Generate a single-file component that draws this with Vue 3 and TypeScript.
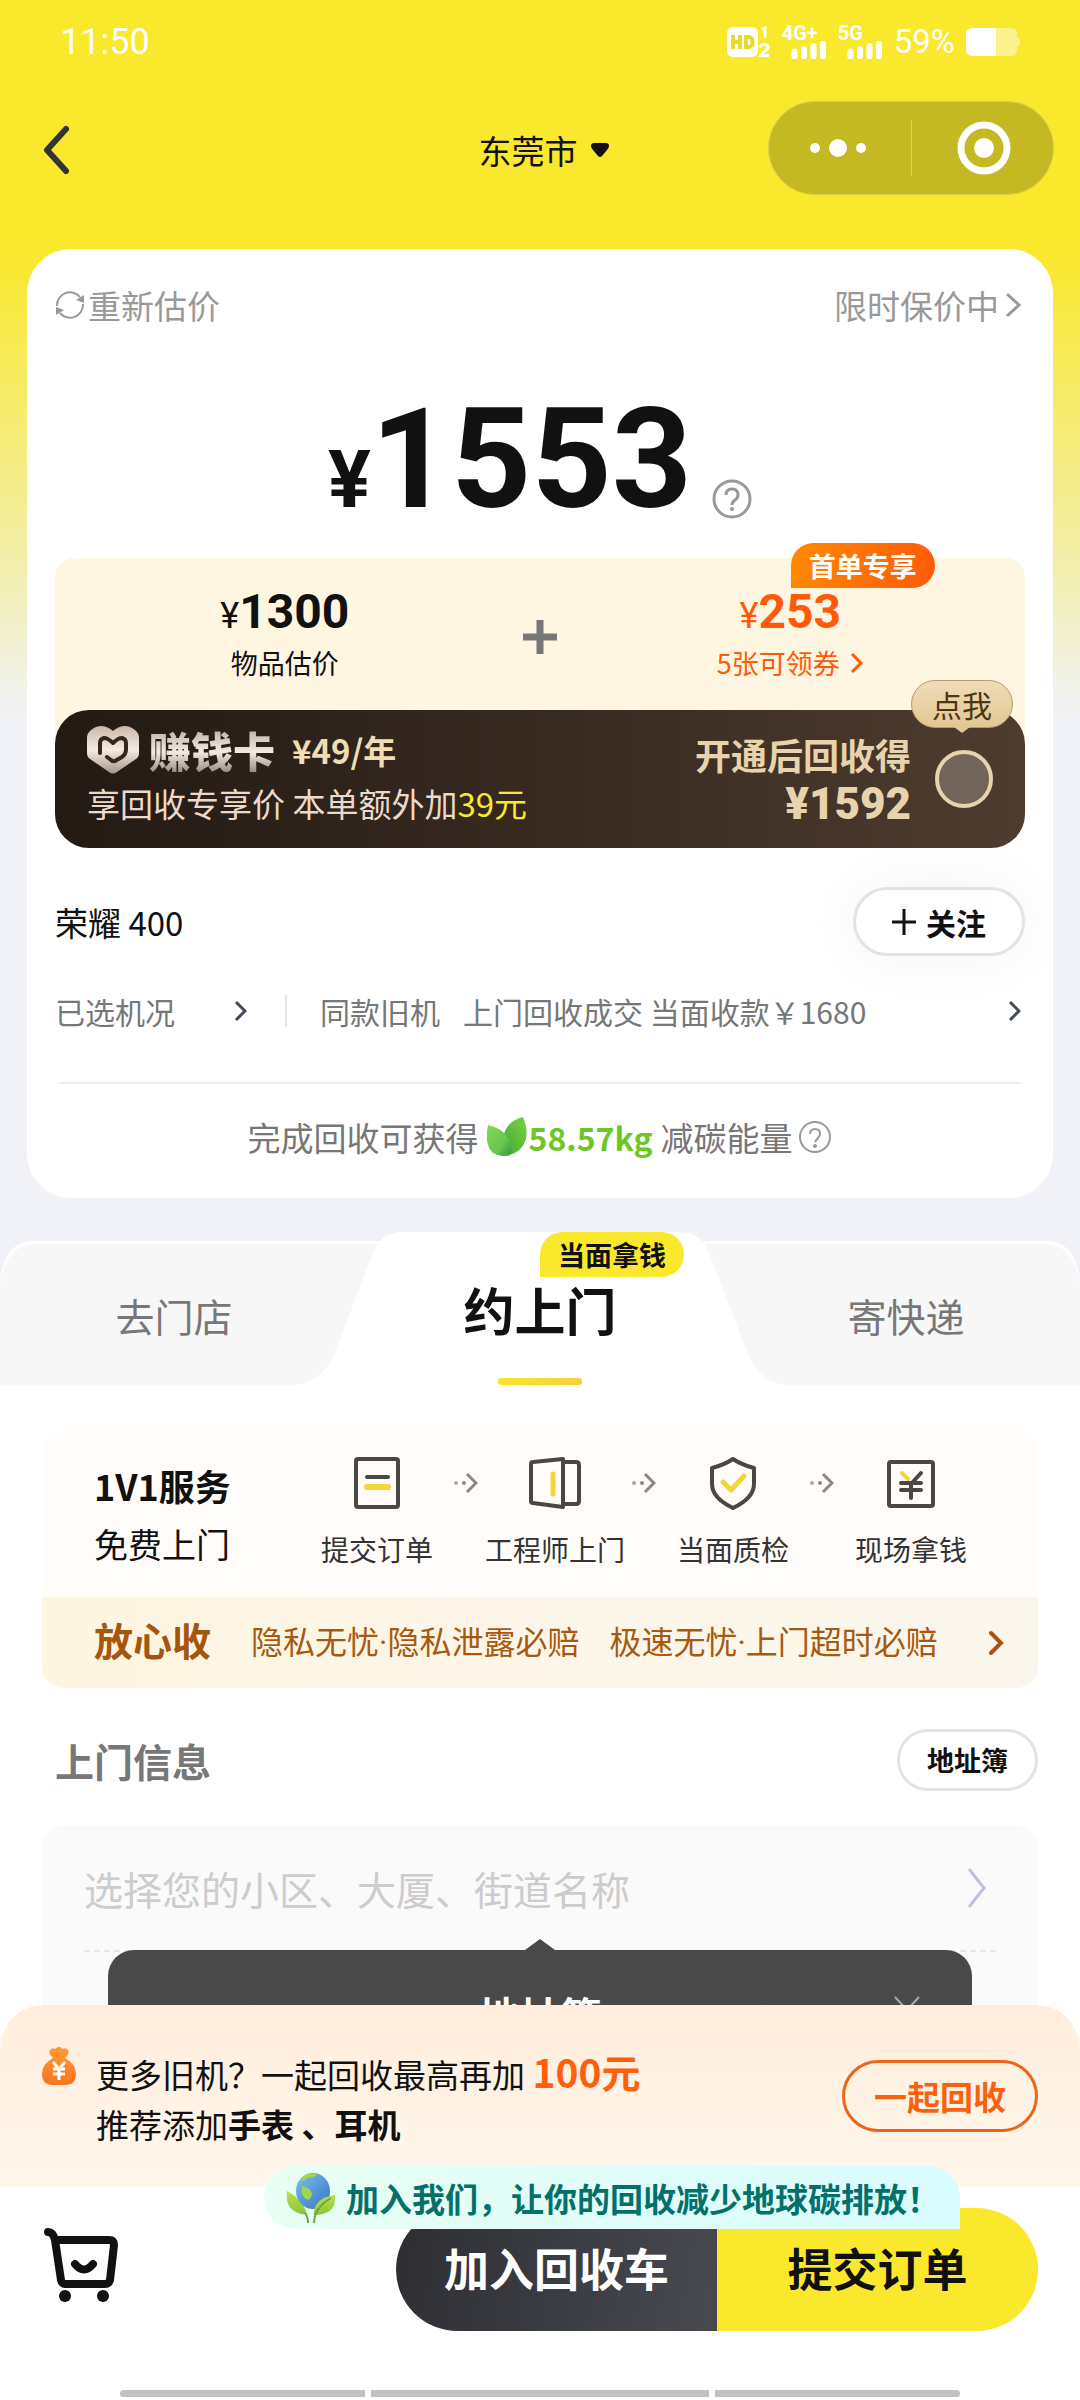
<script setup lang="ts">
import { ref } from 'vue'

interface Step {
  id: string
  label: string
}

const steps: Step[] = [
  { id: 'order', label: '提交订单' },
  { id: 'door', label: '工程师上门' },
  { id: 'check', label: '当面质检' },
  { id: 'cash', label: '现场拿钱' },
]

const tabs = ['去门店', '约上门', '寄快递']
const activeTab = ref('约上门')
const address = ref('')
</script>

<template>
  <div class="page">
    <header class="status">
      <span class="time">11:50</span>
      <span class="signals">
        <svg width="44" height="32" viewBox="0 0 44 32" aria-hidden="true">
          <rect x="0" y="1" width="31" height="30" rx="6" fill="#fff" />
          <g fill="none" stroke="#e8d92c" stroke-width="4">
            <path d="M6 9v14M13 9v14M6 16h7M19 11h2.500a4 4 0 0 1 4 4v2a4 4 0 0 1-4 4H19z" />
          </g>
          <g fill="none" stroke="#fff" stroke-width="3">
            <path d="M35 3l3-1V12M33.500 21.500c0-4 7.500-4 7.500 0 0 3-7 5-7.500 8H42" />
          </g>
        </svg>
        <span class="cell">
          <b>4G+</b>
          <svg width="36" height="18" viewBox="0 0 36 18" aria-hidden="true">
            <path d="M3.500 15.500v-5M13 15.500V8M22.500 15.500V5M32 15.500v-13" fill="none" stroke="#fff" stroke-width="6" stroke-linecap="round" />
          </svg>
        </span>
        <span class="cell">
          <b>5G</b>
          <svg width="36" height="18" viewBox="0 0 36 18" aria-hidden="true">
            <path d="M3.500 15.500v-5M13 15.500V8M22.500 15.500V5M32 15.500v-13" fill="none" stroke="#fff" stroke-width="6" stroke-linecap="round" />
          </svg>
        </span>
        <span class="battery-text">59%</span>
        <svg width="54" height="28" viewBox="0 0 54 28" aria-hidden="true">
          <path d="M7 0h38q6 0 6 6v3q3 1 3 5t-3 5v3q0 6-6 6H7q-7 0-7-7V7q0-7 7-7z" fill="#fbf28e" />
          <path d="M7 0h23v28H7q-7 0-7-7V7q0-7 7-7z" fill="#fff" />
        </svg>
      </span>
    </header>

    <nav class="nav">
      <button class="back" type="button" aria-label="返回">
        <svg width="28" height="50" viewBox="0 0 28 50" aria-hidden="true">
          <path d="M24 4 5 25l19 21" fill="none" stroke="#333" stroke-width="6" stroke-linecap="round" stroke-linejoin="round" />
        </svg>
      </button>
      <button class="city" type="button">
        东莞市
        <svg width="20" height="16" viewBox="0 0 20 16" aria-hidden="true">
          <path d="M4 1h12q3 0 3 3 0 2-2 4l-5 6q-2 2-4 0L3 8Q1 6 1 4q0-3 3-3z" fill="#111" />
        </svg>
      </button>
      <div class="capsule">
        <button type="button" aria-label="更多">
          <svg width="60" height="24" viewBox="0 0 60 24" aria-hidden="true">
            <g fill="#fff"><circle cx="7" cy="12" r="5" /><circle cx="30" cy="12" r="9" /><circle cx="53" cy="12" r="5" /></g>
          </svg>
        </button>
        <button type="button" aria-label="关闭">
          <svg width="54" height="54" viewBox="0 0 54 54" aria-hidden="true">
            <circle cx="27" cy="27" r="23" fill="none" stroke="#fff" stroke-width="7" />
            <circle cx="27" cy="27" r="10" fill="#fff" />
          </svg>
        </button>
      </div>
    </nav>

    <section class="card">
      <div class="card-top">
        <button class="plain" type="button">
          <svg width="30" height="30" viewBox="0 0 30 30" aria-hidden="true">
            <g fill="none" stroke="#999" stroke-width="2">
              <path d="M2 16A13 13 0 0 1 25 7M28 14A13 13 0 0 1 5 23" />
            </g>
            <path d="M29 5v8l-8-3zM1 25v-8l8 3z" fill="#999" />
          </svg>
          重新估价
        </button>
        <button class="plain" type="button">
          限时保价中
          <svg class="chev-gap" width="17" height="26" viewBox="0 0 17 26" aria-hidden="true">
            <path d="M2 2l12 11L2 24" fill="none" stroke="#999" stroke-width="3" />
          </svg>
        </button>
      </div>

      <div class="total">
        <span class="total-unit">¥</span><span class="total-num">1553</span>
        <button class="help" type="button" aria-label="说明">
          <svg width="40" height="40" viewBox="0 0 40 40" aria-hidden="true">
            <circle cx="20" cy="20" r="18" fill="none" stroke="#999" stroke-width="3" />
            <path d="M14 16q0-6 6-6t6 6q0 3-3 5t-3 5" fill="none" stroke="#999" stroke-width="3" />
            <circle cx="20" cy="30" r="2" fill="#999" />
          </svg>
        </button>
      </div>

      <div class="offer">
        <div class="parts">
          <div class="part">
            <p class="amount"><span>¥</span><b>1300</b></p>
            <p class="note">物品估价</p>
          </div>
          <svg class="plus" width="34" height="34" viewBox="0 0 34 34" aria-hidden="true">
            <path d="M17 0v34M0 17h34" stroke="#777" stroke-width="7" />
          </svg>
          <div class="part hot">
            <p class="amount"><span>¥</span><b>253</b></p>
            <button class="note" type="button">
              5张可领券
              <svg width="14" height="20" viewBox="0 0 14 20" aria-hidden="true">
                <path d="M2 1l9 9-9 9" fill="none" stroke="#ff5a0a" stroke-width="3" />
              </svg>
            </button>
            <span class="badge first">首单专享</span>
          </div>
        </div>

        <div class="vip">
          <div class="vip-left">
            <p class="vip-head">
              <svg width="52" height="48" viewBox="0 0 52 48" aria-hidden="true">
                <defs>
                  <linearGradient id="metal" x1="0" y1="0" x2="0" y2="1">
                    <stop offset="0" stop-color="#c9b6a8" />
                    <stop offset=".5" stop-color="#f5ebe2" />
                    <stop offset="1" stop-color="#a8968a" />
                  </linearGradient>
                </defs>
                <path d="M14 0q6 0 12 5Q32 0 38 0q5 0 10 4 4 3 4 8v15q0 4-3 6L30 46q-4 3-8 0L3 33q-3-2-3-6V12q0-5 4-8 5-4 10-4z" fill="url(#metal)" />
                <path d="M13 27V17q0-4 4-5 4 0 9 5 5-5 9-5 4 1 4 5v7q0 4-4 7l-7 4q-2 1-4-1l-4-3" fill="none" stroke="#35271a" stroke-width="4" stroke-linecap="round" stroke-linejoin="round" />
              </svg>
              <strong class="vip-name">赚钱卡</strong>
              <span class="vip-fee">¥49/年</span>
            </p>
            <p class="vip-desc">享回收专享价 本单额外加<em>39元</em></p>
          </div>
          <div class="vip-right">
            <label for="vip-pick">开通后回收得</label>
            <b>¥1592</b>
          </div>
          <input id="vip-pick" class="pick" type="radio" name="vip">
          <span class="bubble">点我</span>
        </div>
      </div>

      <div class="device">
        <h1>荣耀 400</h1>
        <button class="follow" type="button">
          <svg width="24" height="28" viewBox="0 0 24 28" aria-hidden="true">
            <path d="M12 1v26M0 14h24" stroke="#111" stroke-width="3" />
          </svg>
          关注
        </button>
      </div>

      <div class="facts">
        <button class="plain state" type="button">
          已选机况
          <svg width="13" height="20" viewBox="0 0 13 20" aria-hidden="true">
            <path d="M2 1l9 9-9 9" fill="none" stroke="#434b5a" stroke-width="3" />
          </svg>
        </button>
        <button class="plain deals" type="button">
          <span>同款旧机</span>
          <span class="deal">上门回收成交 当面收款￥1680</span>
          <svg width="13" height="20" viewBox="0 0 13 20" aria-hidden="true">
            <path d="M2 1l9 9-9 9" fill="none" stroke="#434b5a" stroke-width="3" />
          </svg>
        </button>
      </div>

      <p class="carbon">
        完成回收可获得
        <svg class="leaf" width="40" height="40" viewBox="0 0 40 40" aria-hidden="true">
          <defs>
            <linearGradient id="leafA" x1="0" y1="0" x2="1" y2="1">
              <stop offset="0" stop-color="#7ed957" />
              <stop offset=".6" stop-color="#6cc84e" />
              <stop offset="1" stop-color="#2f9a3e" />
            </linearGradient>
            <linearGradient id="leafB" x1="1" y1="0" x2="0" y2="1">
              <stop offset="0" stop-color="#7bd23e" />
              <stop offset="1" stop-color="#3fa83c" />
            </linearGradient>
          </defs>
          <path d="M36 0q5 12 3 22-4 14-20 17-6-12-1-25 5-11 18-14z" fill="url(#leafB)" />
          <path d="M1 8q14 3 20 13 6 9 2 17-8 3-17-2Q-3 28 1 8z" fill="url(#leafA)" />
        </svg>
        <b>58.57kg</b>
        减碳能量
        <svg class="carbon-help" width="34" height="34" viewBox="0 0 34 34" aria-hidden="true">
          <circle cx="17" cy="17" r="15" fill="none" stroke="#999" stroke-width="2" />
          <path d="M12 14q0-5 5-5t5 5q0 2-2 4t-3 4" fill="none" stroke="#999" stroke-width="2" />
          <circle cx="17" cy="26" r="2" fill="#999" />
        </svg>
      </p>
    </section>

    <div class="tabs" role="tablist">
      <svg class="tabs-bg" viewBox="0 0 1080 153" preserveAspectRatio="none" aria-hidden="true">
        <path d="M0 153V54Q2 9 34 9H1046Q1078 9 1080 54V153z" fill="#fff" />
        <path d="M0 153V56Q4 12 36 12H1044Q1076 12 1080 56V153z" fill="#f7f7f7" />
        <path d="M296 153Q326 150 338 112L372 24Q380 0 402 0H680Q702 0 710 24L744 112Q756 150 786 153z" fill="#fff" />
      </svg>
      <button
        v-for="t in tabs"
        :key="t"
        type="button"
        role="tab"
        class="tab"
        :class="{ on: t === activeTab }"
        :aria-selected="t === activeTab"
        @click="activeTab = t"
      >
        {{ t }}
        <span v-if="t === '约上门'" class="badge cash">当面拿钱</span>
      </button>
    </div>

    <main class="sheet">
      <section class="service">
        <div class="service-top">
          <div class="service-title">
            <h2>1V1服务</h2>
            <p>免费上门</p>
          </div>
          <ol class="steps">
            <template v-for="(s, i) in steps" :key="s.id">
              <li v-if="i > 0" class="arrow" aria-hidden="true">
                <svg width="24" height="22" viewBox="0 0 24 22">
                  <circle cx="2" cy="11" r="2" fill="#aaa" />
                  <circle cx="10" cy="11" r="2" fill="#888" />
                  <path d="M13 2l9 9-9 9" fill="none" stroke="#888" stroke-width="3" />
                </svg>
              </li>
              <li class="step">
                <svg width="52" height="54" viewBox="0 0 52 54" fill="none" stroke="#4a4846" stroke-width="4" stroke-linecap="round" stroke-linejoin="round" aria-hidden="true">
                  <template v-if="s.id === 'order'">
                    <rect x="5" y="3" width="42" height="48" rx="2" />
                    <path d="M16 21h21" />
                    <path d="M16 31h21" stroke="#f5d53c" stroke-width="6" />
                  </template>
                  <template v-else-if="s.id === 'door'">
                    <path d="M34 3 4 6q-2 0-2 2v37q0 2 2 2l30 4z" />
                    <path d="M34 6h13q3 0 3 3v36q0 3-3 3H34" />
                    <path d="M24 18v20" stroke="#f5d53c" stroke-width="5" />
                  </template>
                  <template v-else-if="s.id === 'check'">
                    <path d="M26 3q9 6 21 9v16q0 14-21 24Q5 42 5 28V12q12-3 21-9z" />
                    <path d="M16 26l8 8 13-14" stroke="#f5d53c" stroke-width="5" />
                  </template>
                  <template v-else>
                    <rect x="4" y="6" width="44" height="44" rx="2" />
                    <path d="M36 17 26 28v14M16 27h20M16 34h20" />
                    <path d="M17 17l6 6" stroke="#f5d53c" />
                  </template>
                </svg>
                {{ s.label }}
              </li>
            </template>
          </ol>
        </div>
        <button class="promise" type="button">
          <strong>放心收</strong>
          <span class="promise-a">隐私无忧·隐私泄露必赔</span>
          <span>极速无忧·上门超时必赔</span>
          <svg width="16" height="26" viewBox="0 0 16 26" aria-hidden="true">
            <path d="M2 3l10 10L2 23" fill="none" stroke="#a8540f" stroke-width="4" stroke-linecap="round" />
          </svg>
        </button>
      </section>

      <div class="visit-head">
        <h2>上门信息</h2>
        <button class="book" type="button">地址簿</button>
      </div>

      <section class="form">
        <div class="field">
          <input v-model="address" type="text" aria-label="地址" placeholder="选择您的小区、大厦、街道名称">
          <svg width="20" height="42" viewBox="0 0 20 42" aria-hidden="true">
            <path d="M2 2l15 19L2 40" fill="none" stroke="#c3bedb" stroke-width="3" />
          </svg>
        </div>
        <div class="tip" role="dialog" aria-label="地址簿">
          <h3>地址簿</h3>
          <button type="button" aria-label="关闭提示">
            <svg width="28" height="34" viewBox="0 0 28 34" aria-hidden="true">
              <path d="M2 4l24 26M26 4 2 30" stroke="#aaa" stroke-width="2" />
            </svg>
          </button>
        </div>
      </section>
    </main>

    <footer class="dock">
      <div class="bundle">
        <svg width="34" height="40" viewBox="0 0 34 40" aria-hidden="true">
          <defs>
            <linearGradient id="bag" x1="0" y1="0" x2="0" y2="1">
              <stop offset="0" stop-color="#ff9a35" />
              <stop offset="1" stop-color="#fb7420" />
            </linearGradient>
          </defs>
          <path d="M8 4q2-3 5-1 4-4 8 0 3-2 5 1 2 4-3 8 11 6 11 16 0 11-11 11H11Q0 39 0 28 0 18 11 12 6 8 8 4z" fill="url(#bag)" />
          <path d="M11 16l6 7 6-7M17 23v11M11 23h12M11 28h12" fill="none" stroke="#fff" stroke-width="3" />
        </svg>
        <p>
          更多旧机？一起回收最高再加 <b class="bonus">100元</b><br>
          推荐添加<b>手表 、耳机</b>
        </p>
        <button class="together" type="button">一起回收</button>
      </div>

      <div class="actions">
        <button class="cart" type="button" aria-label="回收车">
          <svg width="74" height="76" viewBox="0 0 74 76" aria-hidden="true">
            <g fill="none" stroke="#111" stroke-width="8" stroke-linecap="round" stroke-linejoin="round">
              <path d="M4 5q5 0 7 8l6 40q1 4 4 4h40q4 0 5-4l4-35q0-5-5-5H13" />
              <path d="M31 37q9 11 18 0" />
            </g>
            <g fill="#111"><circle cx="21" cy="69" r="6" /><circle cx="59" cy="69" r="6" /></g>
          </svg>
        </button>
        <div class="cta">
          <button class="add" type="button">加入回收车</button>
          <button class="submit" type="button">提交订单</button>
        </div>
      </div>
      <div class="keys" aria-hidden="true"><i /><i /><i /></div>

      <div class="eco">
        <svg width="50" height="52" viewBox="0 0 50 52" aria-hidden="true">
          <defs>
            <linearGradient id="globe" x1="0" y1="0" x2="1" y2="1">
              <stop offset="0" stop-color="#7cc0ea" />
              <stop offset="1" stop-color="#3575c4" />
            </linearGradient>
            <linearGradient id="sprout" x1="0" y1="0" x2="0" y2="1">
              <stop offset="0" stop-color="#b9e04a" />
              <stop offset="1" stop-color="#8cc63a" />
            </linearGradient>
          </defs>
          <path d="M1 19q-3 22 20 24-3-15-20-24z" fill="url(#sprout)" />
          <ellipse cx="27" cy="19" rx="17" ry="18" fill="url(#globe)" />
          <path d="M14 8Q20 0 31 2q-3 4-10 4-3 4-7 2zM16 14q8 2 10 7 0 5-4 7-8-4-6-14z" fill="#a5d646" />
          <path d="M28 43q-1-17 21-20 2 20-21 20z" fill="url(#sprout)" />
          <path d="M45 26Q28 36 28 51M22 51q0-6-3-10" fill="none" stroke="#6ba83f" stroke-width="2" />
        </svg>
        加入我们，让你的回收减少地球碳排放！
      </div>
    </footer>
  </div>
</template>

<style>
body {
  margin: 0;
}
</style>

<style scoped>
.page {
  display: flex;
  flex-direction: column;
  min-height: 100vh;
  color: #111;
  background: linear-gradient(#f9e82c 0, #f9e82c 250px, #f3eea5 550px, #f0f2f7 720px, #f1f1f6 100%);
  font-family: "Noto Sans CJK SC", sans-serif;
  font-size: 33px;
  line-height: 44px;
}
button {
  padding: 0;
  border: 0;
  background: none;
  color: inherit;
  font: inherit;
  white-space: nowrap;
  cursor: pointer;
}
h1, h2, h3, p, ol {
  margin: 0;
  padding: 0;
  font-size: inherit;
  font-weight: 400;
}
svg {
  flex: none;
}

/* status bar */
.status {
  display: flex;
  align-items: center;
  justify-content: space-between;
  height: 84px;
  padding: 0 60px;
  color: #fff;
  font-family: Roboto, sans-serif;
}
.time {
  font-size: 36px;
}
.signals {
  display: flex;
  align-items: center;
  gap: 11px;
}
.cell {
  display: flex;
  flex-direction: column;
  align-items: flex-start;
}
.cell b {
  font-size: 20px;
  line-height: 16px;
}
.cell svg {
  margin-left: 9px;
}
.battery-text {
  font-size: 33px;
}

/* navigation */
.nav {
  display: grid;
  grid-template-columns: 1fr auto 1fr;
  align-items: center;
  height: 132px;
  padding: 0 26px 0 34px;
}
.back {
  display: flex;
  justify-self: start;
  margin-left: 8px;
}
.city {
  display: flex;
  align-items: center;
  gap: 12px;
}
.capsule {
  display: flex;
  justify-self: end;
  width: 286px;
  height: 94px;
  margin-bottom: 4px;
  box-sizing: border-box;
  border: 1px solid #d9cd4a;
  border-radius: 47px;
  background: #c5b923;
}
.capsule button {
  display: flex;
  flex: 1;
  align-items: center;
  justify-content: center;
  padding-right: 4px;
}
.capsule button + button {
  position: relative;
  padding: 0 0 0 4px;
}
.capsule button + button::before {
  position: absolute;
  top: 18px;
  bottom: 18px;
  left: 0;
  width: 1px;
  background: #dcd265;
  content: "";
}

/* valuation card */
.card {
  margin: 33px 27px 0;
  padding: 34px 28px 39px;
  border-radius: 44px;
  background: #fff;
}
.card-top,
.plain,
.device,
.facts {
  display: flex;
  align-items: center;
}
.card-top,
.device {
  justify-content: space-between;
}
.plain {
  gap: 3px;
  color: #999;
}
.chev-gap {
  margin: 0 3px;
}
.total {
  display: flex;
  align-items: baseline;
  justify-content: center;
  height: 160px;
  margin-top: 52px;
  font-family: Roboto, sans-serif;
  font-weight: 700;
  line-height: 160px;
}
.total-unit {
  font-size: 80px;
}
.total-num {
  font-size: 140px;
}
.help {
  align-self: flex-end;
  height: 40px;
  margin: 0 0 20px 20px;
  line-height: 0;
}
.offer {
  margin-top: 19px;
  border-radius: 20px 20px 34px 34px;
  background: #fef6e1;
}
.parts {
  display: grid;
  grid-template-columns: 1fr 51px 1fr;
  justify-items: center;
  height: 152px;
}
.plus {
  margin-top: 62px;
}
.part {
  position: relative;
  display: flex;
  flex-direction: column;
  align-items: center;
  gap: 5px;
  width: 100%;
  padding-top: 30px;
  box-sizing: border-box;
}
.amount {
  font-family: Roboto, sans-serif;
  font-size: 36px;
  line-height: 48px;
}
.amount b {
  font-size: 48px;
}
.note {
  display: flex;
  align-items: center;
  gap: 10px;
  font-size: 27px;
  line-height: 36px;
}
.hot {
  padding-right: 10px;
  color: #ff5a0a;
}
.badge {
  position: absolute;
  padding: 0 18px;
  border-radius: 24px 24px 24px 0;
  font-size: 27px;
  font-weight: 700;
  line-height: 45px;
}
.first {
  top: -15px;
  left: 49%;
  background: linear-gradient(100deg, #ff8a00, #ff5a0a);
  color: #fff;
}
.vip {
  position: relative;
  display: flex;
  align-items: center;
  height: 138px;
  padding: 0 32px;
  border-radius: 34px;
  background: linear-gradient(90deg, #231a14, #35281f 45%, #4e3c2f);
}
.vip-left {
  flex: 1;
  padding-bottom: 6px;
}
.vip-head {
  display: flex;
  align-items: center;
  height: 46px;
}
.vip-name {
  margin: 0 17px 0 10px;
  background: linear-gradient(#bfaea0, #f3eae3 55%, #9d8d82);
  background-clip: text;
  color: transparent;
  font-size: 42px;
  font-weight: 900;
}
.vip-fee {
  color: #f0ddb3;
  font-weight: 700;
}
.vip-desc {
  margin-top: 8px;
  color: #ebd9cb;
}
.vip-desc em {
  color: #f9e82c;
  font-style: normal;
}
.vip-right {
  display: flex;
  flex-direction: column;
  align-items: flex-end;
  margin-right: 24px;
  color: #e7d3ae;
  font-size: 36px;
  font-weight: 700;
}
.vip-right b {
  margin-top: 6px;
  font-family: Roboto, sans-serif;
  font-size: 44px;
}
.pick {
  width: 58px;
  height: 58px;
  margin: 0;
  border: 4px solid #e7d3ae;
  border-radius: 50%;
  background: #71645a;
  appearance: none;
}
.pick:checked {
  background: #f9e82c;
}
.bubble {
  position: absolute;
  top: -30px;
  right: 12px;
  padding: 0 20px;
  border: 1px solid #b39a73;
  border-radius: 24px;
  background: linear-gradient(#efdcb8, #e2c792);
  color: #4e3613;
  font-size: 30px;
  line-height: 46px;
}
.bubble::after {
  position: absolute;
  top: 46px;
  left: 42px;
  border: 8px solid transparent;
  border-top: 6px solid #e2c792;
  border-bottom: 0;
  content: "";
}
.device {
  margin-top: 39px;
}
.follow {
  display: flex;
  align-items: center;
  gap: 10px;
  height: 69px;
  padding: 0 36px;
  border: 3px solid #e3e3e3;
  border-radius: 35px;
  background: #fff;
  box-shadow: 0 0 60px rgb(0 0 0 / 5%);
  box-sizing: border-box;
  font-size: 30px;
  font-weight: 700;
}
.facts {
  margin-top: 33px;
  font-size: 30px;
}
.facts .plain {
  color: #777;
}
.state {
  justify-content: space-between;
  width: 192px;
}
.facts .deals {
  flex: 1;
  margin: 0 4px 0 38px;
}
.deals::before {
  width: 2px;
  height: 32px;
  margin-right: 30px;
  background: #e5e5e5;
  content: "";
}
.deal {
  flex: 1;
  margin-left: 20px;
  text-align: left;
}
.carbon {
  display: flex;
  align-items: center;
  justify-content: center;
  margin: 49px 4px 0;
  padding-top: 31px;
  border-top: 2px solid #eee;
  color: #777;
}
.carbon b {
  margin: 0 8px 0 2px;
  color: #6fc525;
  font-size: 32px;
}
.leaf {
  margin-left: 8px;
}
.carbon-help {
  margin-left: 6px;
}

/* tabs */
.tabs {
  position: relative;
  display: grid;
  grid-template-columns: 29fr 32fr 29fr;
  height: 153px;
  margin-top: 34px;
}
.tabs-bg {
  position: absolute;
  width: 100%;
  height: 100%;
}
.tab {
  position: relative;
  padding-top: 12px;
  color: #777;
  font-size: 39px;
}
.tab.on {
  padding-top: 0;
  color: #111;
  font-size: 51px;
  font-weight: 700;
}
.tab.on::after {
  position: absolute;
  bottom: 0;
  left: 50%;
  width: 84px;
  height: 7px;
  margin-left: -42px;
  border-radius: 3px;
  background: linear-gradient(90deg, #f9e52c, #f8d138);
  content: "";
}
.cash {
  top: 0;
  left: 50%;
  background: #f9e82c;
  color: #111;
}

/* content sheet */
.sheet {
  flex: 1;
  padding: 45px 42px 0;
  background: #fff;
}
.service {
  overflow: hidden;
  border-radius: 22px;
  background: #fffcfa;
}
.service-top {
  display: flex;
  height: 167px;
  padding: 0 50px 0 52px;
}
.service-title {
  flex: 1;
  padding-top: 31px;
  font-size: 34px;
  white-space: nowrap;
}
.service-title h2 {
  margin-bottom: 13px;
  font-size: 36px;
  font-weight: 700;
  line-height: 48px;
}
.steps {
  display: flex;
  padding-top: 26px;
  list-style: none;
}
.step {
  display: flex;
  flex-direction: column;
  align-items: center;
  gap: 21px;
  width: 154px;
  color: #333;
  font-size: 28px;
  line-height: 36px;
  white-space: nowrap;
}
.arrow {
  display: flex;
  align-items: center;
  height: 54px;
}
.promise {
  display: flex;
  align-items: center;
  width: 100%;
  height: 91px;
  padding: 0 33px 0 52px;
  background: linear-gradient(90deg, #fdf5e0, #fdf6e9 50%, #faf6ec);
  color: #a8590f;
  font-family: Roboto, "Noto Sans CJK SC", sans-serif;
  font-size: 32px;
}
.promise strong {
  color: #a4560f;
  font-size: 39px;
}
.promise-a {
  margin: 0 30px 0 40px;
}
.promise svg {
  margin-left: auto;
}
.visit-head {
  display: flex;
  align-items: center;
  justify-content: space-between;
  margin-top: 41px;
  padding-left: 13px;
}
.visit-head h2 {
  color: #777;
  font-size: 39px;
  font-weight: 700;
}
.book {
  height: 62px;
  padding: 0 27px;
  border: 3px solid #e3e3e3;
  border-radius: 31px;
  font-size: 27px;
  font-weight: 700;
  box-sizing: border-box;
}
.form {
  position: relative;
  height: 224px;
  margin-top: 34px;
  border-radius: 22px;
  background: #fafafa;
}
.field {
  display: flex;
  align-items: center;
  height: 125px;
  margin: 0 42px;
  padding-right: 9px;
  border-bottom: 2px dashed #e6e6e6;
}
.field input {
  flex: 1;
  min-width: 0;
  height: 60px;
  padding: 0;
  border: 0;
  outline: 0;
  background: none;
  font: inherit;
  font-size: 39px;
}
.field input::placeholder {
  color: #ccc;
  opacity: 1;
}
.tip {
  position: absolute;
  top: 125px;
  right: 66px;
  left: 66px;
  height: 150px;
  padding-top: 34px;
  border-radius: 26px;
  background: #494949;
  box-sizing: border-box;
  color: #fff;
  text-align: center;
}
.tip::before {
  position: absolute;
  top: -11px;
  left: 50%;
  margin-left: -15px;
  border: 15px solid transparent;
  border-top: 0;
  border-bottom: 11px solid #494949;
  content: "";
}
.tip h3 {
  font-size: 41px;
  font-weight: 700;
  line-height: 60px;
}
.tip button {
  position: absolute;
  top: 43px;
  right: 51px;
  line-height: 0;
}

/* bottom dock */
.dock {
  position: sticky;
  bottom: 0;
  margin-top: -44px;
}
.bundle {
  display: flex;
  align-items: center;
  height: 182px;
  padding: 0 42px;
  border-radius: 44px 44px 0 0;
  background: linear-gradient(#ffeedd, #fff7ec);
}
.bundle > svg {
  align-self: flex-start;
  margin-top: 41px;
}
.bundle p {
  flex: 1;
  margin-left: 20px;
  padding-top: 6px;
  line-height: 50px;
}
.bonus {
  color: #ff5f0a;
  font-size: 39px;
  line-height: 40px;
}
.together {
  height: 72px;
  padding: 0 29px;
  border: 3px solid #ee6517;
  border-radius: 36px;
  color: #f8620c;
  font-weight: 700;
  box-sizing: border-box;
}
.actions {
  display: flex;
  align-items: center;
  justify-content: space-between;
  padding: 21px 42px 59px;
  background: #fff;
}
.cart {
  line-height: 0;
  margin: 0 0 10px 2px;
}
.cta {
  display: flex;
  width: 642px;
  height: 123px;
  overflow: hidden;
  border-radius: 62px;
  font-size: 45px;
  font-weight: 700;
}
.cta button {
  flex: 1;
  padding-bottom: 4px;
}
.add {
  background: linear-gradient(100deg, #2e2e32, #3a3c43 50%, #494a50);
  color: #fff;
}
.submit {
  background: #f9e82c;
}
.keys {
  display: grid;
  grid-template-columns: 245fr 338fr 245fr;
  gap: 6px;
  padding: 0 120px 3px;
  background: #fff;
}
.keys i {
  height: 7px;
  background: #c1c1c1;
}
.keys i:first-child {
  border-radius: 4px 0 0 4px;
}
.keys i:last-child {
  border-radius: 0 4px 4px 0;
}
.eco {
  position: absolute;
  top: 161px;
  right: 120px;
  display: flex;
  align-items: center;
  gap: 10px;
  height: 63px;
  padding: 0 20px 0 22px;
  border-radius: 32px 32px 0 32px;
  background: linear-gradient(90deg, #e8fff3, #d9fcff);
  color: #04706a;
  font-weight: 700;
  white-space: nowrap;
}
</style>
